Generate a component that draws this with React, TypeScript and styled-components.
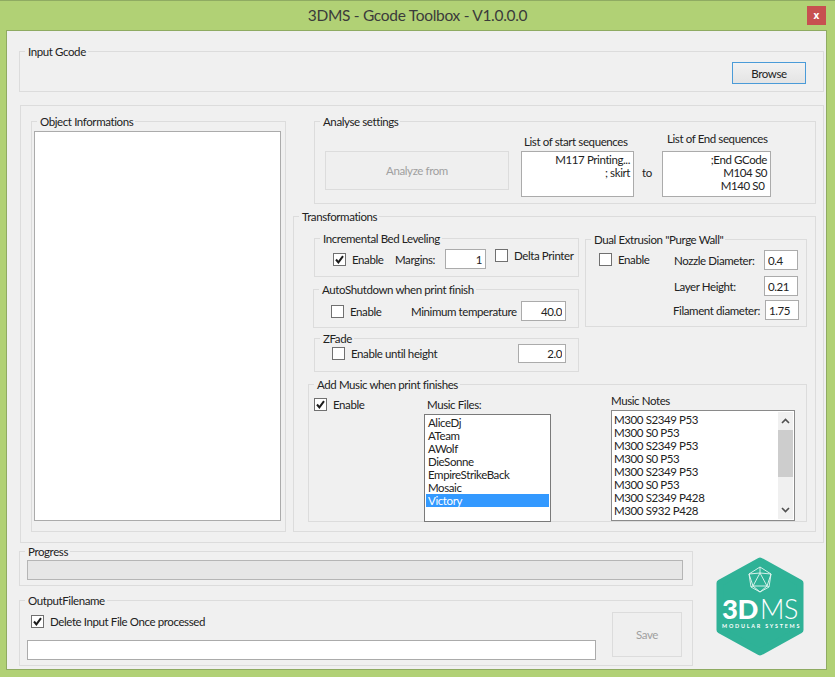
import React from "react";
import styled, { createGlobalStyle } from "styled-components";

const Global = createGlobalStyle`
  html, body { margin: 0; padding: 0; overflow: hidden; }
  body { font-family: Lato, "Open Sans", sans-serif; font-size: 11.5px; letter-spacing: -0.4px; color: #222; }
  * { box-sizing: border-box; }
`;

const Frame = styled.div`
  width: 835px; height: 677px; background: #b1d175; border-top: 1px solid #8fab62;
  display: flex; flex-direction: column;
`;
const TitleBar = styled.header`
  height: 29px; display: grid; grid-template-columns: 1fr auto 1fr; align-items: center;
`;
const Title = styled.h1`
  grid-column: 2; margin: 0; font-size: 15.5px; font-weight: 400; letter-spacing: -0.3px; color: #3b3b3b; line-height: 29px;
`;
const CloseButton = styled.button`
  grid-column: 3; justify-self: end; margin: 0 9px 0 0; width: 19px; height: 19px; padding: 0; border: 0;
  background: #c75050; color: #fff; font: 700 10px "Open Sans", sans-serif; line-height: 17px;
`;
const Client = styled.main`
  margin-left: 6px; width: 821px; height: 640px; background: #f0f0f0; border: 1px solid #8fab62;
  padding: 13px 0 0 12px; display: flex; flex-direction: column;
`;

const Group = styled.fieldset`
  --pad: 0px;
  margin: 0; padding: 0 0 0 var(--pad); min-width: 0; min-inline-size: 0; border: 1px solid #dcdcdc; display: block;
  & > legend {
    margin-left: calc(5px - var(--pad)); padding: 0 2px 0 3px; line-height: 15px; height: 15px; white-space: nowrap;
  }
`;
const InputGroup = styled(Group)`
  width: 805px; height: 48px; display: flex; justify-content: flex-end; padding-top: 3px; padding-right: 17px; align-items: flex-start;
`;
const BrowseButton = styled.button`
  width: 74px; height: 22px; padding: 0; border: 1px solid #4a9bd8; background: linear-gradient(#f2f2f2, #e4e4e4);
  font: inherit; letter-spacing: inherit; color: #222;
`;
const Panel = styled.section`
  margin: 13px 0 0 1px; width: 804px; height: 438px; border: 1px solid #dcdcdc; padding: 8px 0 0 10px;
  display: flex; gap: 7px;
`;
const ObjectGroup = styled(Group)`
  --pad: 2px;
  width: 255px; height: 418px; padding-top: 2px; padding-right: 4px; padding-bottom: 10px;
`;
const ObjectBox = styled.div`
  height: 390px; background: #fff; border: 1px solid #ababab;
`;
const RightColumn = styled.div`
  width: 523px; display: flex; flex-direction: column;
`;
const AnalyseGroup = styled(Group)`
  --pad: 10px;
  width: 502px; height: 90px; margin-left: 21px; display: flex; align-items: flex-end; padding-top: 3px;
`;
const AnalyzeButton = styled.button`
  width: 184px; height: 39px; margin: 0 12px 7px 0; padding: 0; border: 1px solid #dcdcdc; background: #efefef;
  font: inherit; letter-spacing: inherit; color: #a0a0a0;
`;
const SequenceColumn = styled.div<{ $width: number }>`
  width: ${(p) => p.$width}px; display: flex; flex-direction: column;
`;
const SequenceLabel = styled.span<{ $left: number; $gap: number }>`
  line-height: 14px; margin: 0 0 ${(p) => p.$gap}px ${(p) => p.$left}px; white-space: nowrap;
`;
const SequenceBox = styled.div`
  height: 46px; background: #fff; border: 1px solid #ababab; padding: 1px 3px 0 0; text-align: right;
  line-height: 13px; white-space: pre;
`;
const ToLabel = styled.span`
  width: 28px; height: 46px; line-height: 44px; padding-left: 8px;
`;
const TransformGroup = styled(Group)`
  --pad: 14px;
  width: 523px; height: 323px; margin-top: 5px; padding-top: 7px;
`;
const TopRow = styled.div`
  display: flex; gap: 6px; margin-left: 5px;
`;
const LeftStack = styled.div`
  width: 266px; display: flex; flex-direction: column;
`;
const LevelingGroup = styled(Group)`
  width: 265px; height: 46px; margin-left: 1px;
`;
const LevelingRow = styled.div`
  display: flex; align-items: center; padding: 3px 0 0 18px;
`;
const ShutdownGroup = styled(Group)`
  width: 266px; height: 46px; margin-top: 5px;
`;
const ShutdownRow = styled.div`
  display: flex; align-items: center; padding: 4px 0 0 17px;
`;
const FadeGroup = styled(Group)`
  width: 265px; height: 41px; margin: 3px 0 0 1px;
`;
const FadeRow = styled.div`
  display: flex; align-items: center; margin-top: -2px; padding-left: 17px;
`;
const Check = styled.label`
  display: inline-flex; align-items: center; gap: 6px; white-space: nowrap;
`;
const CheckBoxFace = styled.span`
  width: 13px; height: 13px; background: #fff; border: 1px solid #707070; display: inline-flex; flex: none;
`;
const Field = styled.input<{ $width: number; $height?: number; $left?: boolean }>`
  width: ${(p) => p.$width}px; height: ${(p) => p.$height ?? 20}px; flex: none; border: 1px solid #ababab; background: #fff; border-radius: 0;
  font: inherit; letter-spacing: inherit; color: #222; outline: none; margin: 0;
  padding: 0 3px; text-align: ${(p) => (p.$left ? "left" : "right")};
`;
const FixedText = styled.span<{ $left: number; $width: number }>`
  margin-left: ${(p) => p.$left}px; width: ${(p) => p.$width}px; white-space: nowrap;
`;
const FixedCheck = styled.span<{ $width: number }>`
  width: ${(p) => p.$width}px; display: inline-flex; flex: none;
`;
const Spaced = styled.span<{ $left: number; $raise?: number }>`
  margin-left: ${(p) => p.$left}px; margin-bottom: ${(p) => p.$raise ?? 0}px; display: inline-flex;
`;
const DualGroup = styled(Group)`
  width: 222px; height: 95px; margin-top: 1px; display: flex;
`;
const DualCheck = styled.div`
  width: 88px; padding: 6px 0 0 13px;
`;
const DualRows = styled.div`
  padding-top: 3px; display: flex; flex-direction: column;
`;
const DualRow = styled.div<{ $top: number; $labelWidth: number; $shift?: number }>`
  display: flex; align-items: center; margin-top: ${(p) => p.$top}px; margin-left: ${(p) => p.$shift ?? 0}px;
  & > span { width: ${(p) => p.$labelWidth}px; white-space: nowrap; }
`;
const MusicGroup = styled(Group)`
  width: 499px; height: 145px; margin-top: 5px; display: flex;
`;
const MusicCheck = styled.div`
  width: 115px; padding: 6px 0 0 5px;
`;
const FilesColumn = styled.div`
  width: 127px; padding-top: 6px;
`;
const NotesColumn = styled.div`
  width: 184px; margin-left: 60px; padding-top: 2px;
`;
const ListLabel = styled.div<{ $left?: number }>`
  line-height: 14px; margin-left: ${(p) => p.$left ?? 0}px; margin-bottom: 2px;
`;
const FileList = styled.ul`
  margin: 0; padding: 1px 1px; list-style: none; height: 108px; background: #fff; border: 1px solid #7a7a7a;
`;
const FileItem = styled.li<{ $selected?: boolean }>`
  height: 13px; line-height: 13px; padding-left: 2px; background: ${(p) => (p.$selected ? "#3399ff" : "transparent")};
  color: ${(p) => (p.$selected ? "#fff" : "#222")};
`;
const NotesBox = styled.div`
  height: 111px; background: #fff; border: 1px solid #8a8a8a; display: flex; padding: 2px 1px 1px 2px; justify-content: space-between;
`;
const NoteLines = styled.div`
  line-height: 13px; white-space: nowrap;
`;
const ScrollBar = styled.div`
  width: 15px; height: 107px; margin: -1px 0 0; background: #f0f0f0; display: flex; flex-direction: column; align-items: center; justify-content: space-between;
`;
const ScrollThumb = styled.div`
  width: 15px; height: 49px; background: #cdcdcd; margin-bottom: 24px;
`;
const ArrowButton = styled.div`
  height: 18px; display: flex; align-items: center; justify-content: center;
`;
const BottomArea = styled.div`
  display: flex; margin-top: 1px;
`;
const BottomLeft = styled.div`
  width: 674px; display: flex; flex-direction: column;
`;
const ProgressGroup = styled(Group)`
  --pad: 7px;
  width: 674px; height: 42px; padding-top: 1px;
`;
const ProgressBar = styled.div`
  width: 656px; height: 20px; background: #e6e6e6; border: 1px solid #b5b5b5;
`;
const OutputGroup = styled(Group)`
  --pad: 7px;
  width: 674px; height: 73px; margin-top: 7px; display: flex;
`;
const OutputLeft = styled.div`
  width: 585px; display: flex; flex-direction: column;
`;
const DeleteRow = styled.div`
  padding: 7px 0 0 4px; height: 32px;
`;
const SaveButton = styled.button`
  width: 70px; height: 45px; margin-top: 4px; padding: 0; border: 1px solid #dcdcdc; background: #efefef;
  font: inherit; letter-spacing: inherit; color: #a0a0a0;
`;
const LogoMark = styled.svg`
  flex: none; width: 88px; height: 99px; margin: 13px 0 0 23px;
`;

const CheckBox = ({ checked, children }: { checked?: boolean; children: React.ReactNode }) => (
  <Check>
    <CheckBoxFace>
      {checked && (
        <svg width="11" height="11" viewBox="0 0 11 11">
          <path d="M2 5.5 L4.4 8.4 L9 2.2" fill="none" stroke="#1c1c1c" strokeWidth="2" />
        </svg>
      )}
    </CheckBoxFace>
    {children}
  </Check>
);

const files = ["AliceDj", "ATeam", "AWolf", "DieSonne", "EmpireStrikeBack", "Mosaic", "Victory"];
const notes = [
  "M300 S2349 P53", "M300 S0 P53", "M300 S2349 P53", "M300 S0 P53",
  "M300 S2349 P53", "M300 S0 P53", "M300 S2349 P428", "M300 S932 P428",
];

const Chevron = ({ up }: { up?: boolean }) => (
  <svg width="9" height="6" viewBox="0 0 9 6">
    <path d={up ? "M1 5 L4.5 1.5 L8 5" : "M1 1 L4.5 4.5 L8 1"} fill="none" stroke="#505050" strokeWidth="1.6" />
  </svg>
);

const Logo = () => (
  <LogoMark viewBox="0 0 88 99">
    <polygon points="44,4 84,26 84,73 44,95 4,73 4,26" fill="#2fb297" stroke="#2fb297" strokeWidth="7" strokeLinejoin="round" />
    <g fill="none" stroke="#e6f6f2" strokeWidth="0.9" strokeLinejoin="round">
      <polygon points="44,10 55,17 53,30 44,35 35,30 33,17" />
      <polygon points="44,16 51,29 37,29" />
      <path d="M44 10 L44 16 M33 17 L44 16 M55 17 L44 16 M33 17 L37 29 M55 17 L51 29 M35 30 L37 29 M53 30 L51 29 M44 35 L37 29 M44 35 L51 29" />
    </g>
    <text x="6" y="62" fill="#fff" fontFamily="Lato, sans-serif" fontWeight="900" fontSize="27" textLength="36" lengthAdjust="spacingAndGlyphs">3D</text>
    <text x="44" y="62" fill="#fff" fontFamily="Lato, sans-serif" fontWeight="300" fontSize="27" textLength="38" lengthAdjust="spacingAndGlyphs">MS</text>
    <text x="6" y="71" fill="#fff" fontFamily="Lato, sans-serif" fontWeight="700" fontSize="5.4" textLength="77">MODULAR SYSTEMS</text>
  </LogoMark>
);

export default function App() {
  return (
    <>
      <Global />
      <Frame>
        <TitleBar>
          <Title>3DMS - Gcode Toolbox - V1.0.0.0</Title>
          <CloseButton>x</CloseButton>
        </TitleBar>
        <Client>
          <InputGroup>
            <legend>Input Gcode</legend>
            <BrowseButton>Browse</BrowseButton>
          </InputGroup>
          <Panel>
            <ObjectGroup>
              <legend>Object Informations</legend>
              <ObjectBox />
            </ObjectGroup>
            <RightColumn>
              <AnalyseGroup>
                <legend>Analyse settings</legend>
                <AnalyzeButton>Analyze from</AnalyzeButton>
                <SequenceColumn $width={113}>
                  <SequenceLabel $left={3} $gap={2}>List of start sequences</SequenceLabel>
                  <SequenceBox>{"M117 Printing...\n; skirt"}</SequenceBox>
                </SequenceColumn>
                <ToLabel>to</ToLabel>
                <SequenceColumn $width={109}>
                  <SequenceLabel $left={5} $gap={5}>List of End sequences</SequenceLabel>
                  <SequenceBox>{";End GCode\nM104 S0\nM140 S0\u00a0"}</SequenceBox>
                </SequenceColumn>
              </AnalyseGroup>
              <TransformGroup>
                <legend>Transformations</legend>
                <TopRow>
                  <LeftStack>
                    <LevelingGroup>
                      <legend>Incremental Bed Leveling</legend>
                      <LevelingRow>
                        <FixedCheck $width={51}><CheckBox checked>Enable</CheckBox></FixedCheck>
                        <FixedText $left={11} $width={50}>Margins:</FixedText>
                        <Field $width={41} readOnly value="1" />
                        <Spaced $left={9} $raise={7}><CheckBox>Delta Printer</CheckBox></Spaced>
                      </LevelingRow>
                    </LevelingGroup>
                    <ShutdownGroup>
                      <legend>AutoShutdown when print finish</legend>
                      <ShutdownRow>
                        <FixedCheck $width={51}><CheckBox>Enable</CheckBox></FixedCheck>
                        <FixedText $left={29} $width={110}>Minimum temperature</FixedText>
                        <Field $width={45} readOnly value="40.0" />
                      </ShutdownRow>
                    </ShutdownGroup>
                    <FadeGroup>
                      <legend>ZFade</legend>
                      <FadeRow>
                        <FixedCheck $width={186}><CheckBox>Enable until height</CheckBox></FixedCheck>
                        <Field $width={48} $height={19} readOnly value="2.0" />
                      </FadeRow>
                    </FadeGroup>
                  </LeftStack>
                  <DualGroup>
                    <legend>Dual Extrusion "Purge Wall"</legend>
                    <DualCheck><CheckBox>Enable</CheckBox></DualCheck>
                    <DualRows>
                      <DualRow $top={0} $labelWidth={90}><span>Nozzle Diameter:</span><Field $width={34} $left readOnly value="0.4" /></DualRow>
                      <DualRow $top={6} $labelWidth={90}><span>Layer Height:</span><Field $width={34} $left readOnly value="0.21" /></DualRow>
                      <DualRow $top={4} $labelWidth={92} $shift={-1}><span>Filament diameter:</span><Field $width={34} $left readOnly value="1.75" /></DualRow>
                    </DualRows>
                  </DualGroup>
                </TopRow>
                <MusicGroup>
                  <legend>Add Music when print finishes</legend>
                  <MusicCheck><CheckBox checked>Enable</CheckBox></MusicCheck>
                  <FilesColumn>
                    <ListLabel $left={3}>Music Files:</ListLabel>
                    <FileList>
                      {files.map((f) => (
                        <FileItem key={f} $selected={f === "Victory"}>{f}</FileItem>
                      ))}
                    </FileList>
                  </FilesColumn>
                  <NotesColumn>
                    <ListLabel>Music Notes</ListLabel>
                    <NotesBox>
                      <NoteLines>
                        {notes.map((n, i) => (
                          <div key={i}>{n}</div>
                        ))}
                      </NoteLines>
                      <ScrollBar>
                        <ArrowButton><Chevron up /></ArrowButton>
                        <ScrollThumb />
                        <ArrowButton><Chevron /></ArrowButton>
                      </ScrollBar>
                    </NotesBox>
                  </NotesColumn>
                </MusicGroup>
              </TransformGroup>
            </RightColumn>
          </Panel>
          <BottomArea>
            <BottomLeft>
              <ProgressGroup>
                <legend>Progress</legend>
                <ProgressBar />
              </ProgressGroup>
              <OutputGroup>
                <legend>OutputFilename</legend>
                <OutputLeft>
                  <DeleteRow><CheckBox checked>Delete Input File Once processed</CheckBox></DeleteRow>
                  <Field $width={569} $left readOnly value="" />
                </OutputLeft>
                <SaveButton>Save</SaveButton>
              </OutputGroup>
            </BottomLeft>
            <Logo />
          </BottomArea>
        </Client>
      </Frame>
    </>
  );
}
